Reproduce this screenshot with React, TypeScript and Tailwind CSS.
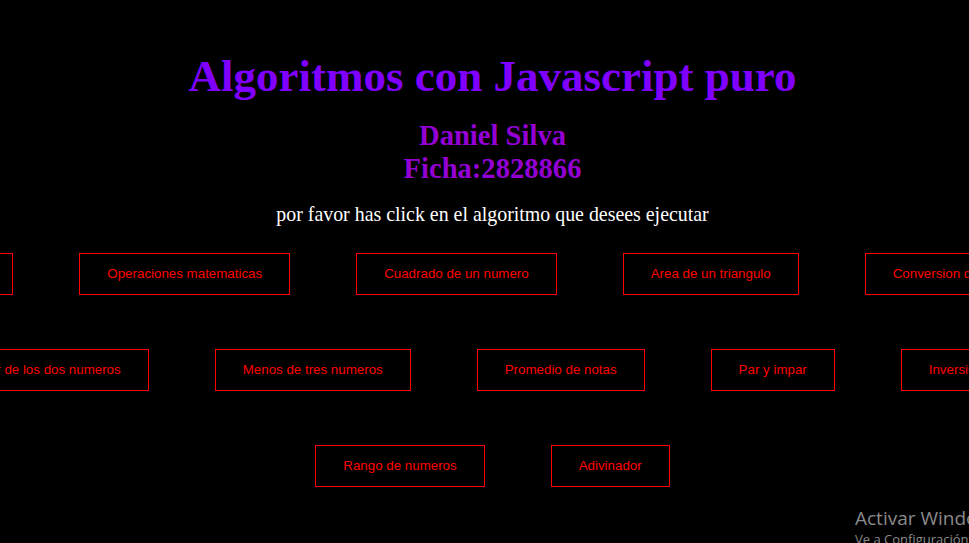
import React from "react";

const row1 = [
  "Variables",
  "Operaciones matematicas",
  "Cuadrado de un numero",
  "Area de un triangulo",
  "Conversion de temperatura",
];
const row2 = [
  "El mayor de los dos numeros",
  "Menos de tres numeros",
  "Promedio de notas",
  "Par y impar",
  "Inversion de cifras",
];
const row3 = ["Rango de numeros", "Adivinador"];

function Btn({ label }: { label: string }) {
  return (
    <button className="shrink-0 whitespace-nowrap border border-[#ff0000] bg-black px-[27px] py-3 text-[13.333px] leading-[16px] text-[#ff0000] font-['Liberation_Sans',Arial,sans-serif]">
      {label}
    </button>
  );
}

function Row({ items, className }: { items: string[]; className: string }) {
  return (
    <div className={"flex justify-center gap-[66px] " + className}>
      {items.map((l) => (
        <Btn key={l} label={l} />
      ))}
    </div>
  );
}

export default function App() {
  return (
    <div className="relative h-[543px] w-full overflow-hidden bg-black">
      <div className="pl-4 text-center font-['Liberation_Serif','Times_New_Roman',serif]">
        <h1 className="pt-[50px] text-[45px] font-bold leading-[52px] text-[#8000ff]">
          Algoritmos con Javascript puro
        </h1>
        <h2 className="mt-[17px] text-[28.6px] font-bold leading-[33px] text-[#9400d3]">
          Daniel Silva
          <br />
          Ficha:2828866
        </h2>
        <p className="mt-[18px] text-[19.9px] leading-[23px] text-white">
          por favor has click en el algoritmo que desees ejecutar
        </p>
        <Row items={row1} className="mt-[27px]" />
        <Row items={row2} className="mt-[54px]" />
        <Row items={row3} className="mt-[54px]" />
      </div>
      <div className="absolute left-[855px] top-[506px] whitespace-nowrap font-['Open_Sans','Noto_Sans',sans-serif] text-[#8a8a8a]">
        <div className="text-[19px] leading-[24px]">Activar Windows</div>
        <div className="text-[13px] leading-[18px]">Ve a Configuración para activar Windows.</div>
      </div>
    </div>
  );
}
